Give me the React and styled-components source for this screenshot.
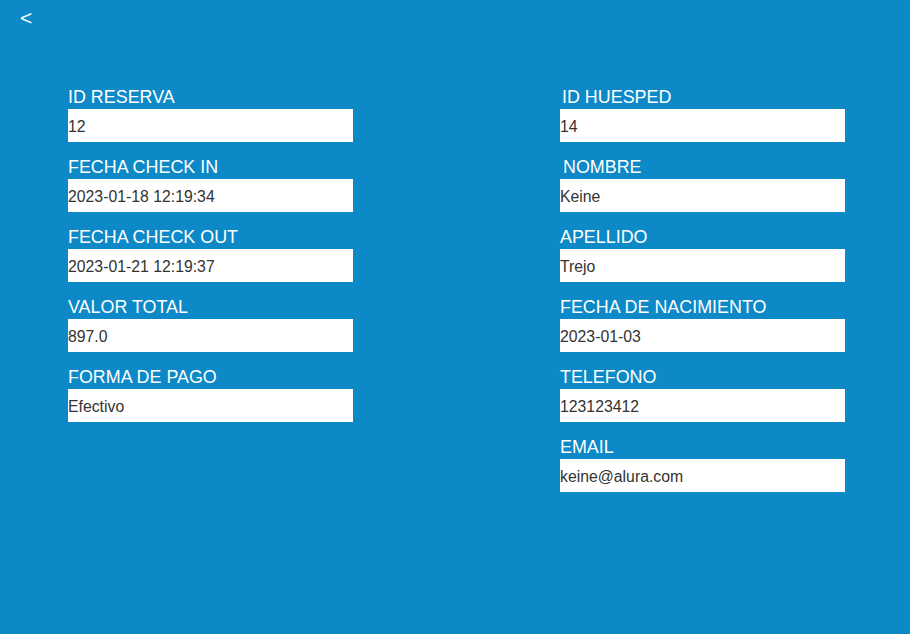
import React from "react";
import styled, { createGlobalStyle } from "styled-components";

const Global = createGlobalStyle`
  html, body { margin: 0; padding: 0; }
  body {
    background: #0c89c6;
    font-family: "Liberation Sans", Arial, sans-serif;
  }
`;

const Page = styled.div`
  width: 910px;
  height: 634px;
  background: #0c89c6;
  box-sizing: border-box;
  position: relative;
`;

const Back = styled.div`
  position: absolute;
  left: 20px;
  top: 6px;
  color: #ffffff;
  font-size: 21px;
  line-height: 24px;
`;

const Columns = styled.div`
  display: grid;
  grid-template-columns: 285px 285px;
  column-gap: 207px;
  padding: 86px 0 0 68px;
`;

const Column = styled.div`
  display: flex;
  flex-direction: column;
  gap: 14px;
`;

const Field = styled.div`
  display: flex;
  flex-direction: column;
  gap: 1px;
`;

const Label = styled.div`
  color: #ffffff;
  font-size: 17.9px;
  line-height: 22px;
  height: 22px;
  white-space: nowrap;
  padding-left: ${(p) => p.$indent || 0}px;
`;

const Value = styled.div`
  background: #ffffff;
  color: #333333;
  font-size: 15.8px;
  height: 33px;
  box-sizing: border-box;
  padding-top: 2px;
  line-height: 31px;
  white-space: nowrap;
`;

const left = [
  ["ID RESERVA", "12"],
  ["FECHA CHECK IN", "2023-01-18 12:19:34"],
  ["FECHA CHECK OUT", "2023-01-21 12:19:37"],
  ["VALOR TOTAL", "897.0"],
  ["FORMA DE PAGO", "Efectivo"],
];

const right = [
  ["ID HUESPED", "14", 2],
  ["NOMBRE", "Keine", 3],
  ["APELLIDO", "Trejo"],
  ["FECHA DE NACIMIENTO", "2023-01-03"],
  ["TELEFONO", "123123412"],
  ["EMAIL", "keine@alura.com"],
];

export default function App() {
  return (
    <Page>
      <Global />
      <Back>&lt;</Back>
      <Columns>
        <Column>
          {left.map(([l, v]) => (
            <Field key={l}>
              <Label>{l}</Label>
              <Value>{v}</Value>
            </Field>
          ))}
        </Column>
        <Column>
          {right.map(([l, v, i]) => (
            <Field key={l}>
              <Label $indent={i}>{l}</Label>
              <Value>{v}</Value>
            </Field>
          ))}
        </Column>
      </Columns>
    </Page>
  );
}
